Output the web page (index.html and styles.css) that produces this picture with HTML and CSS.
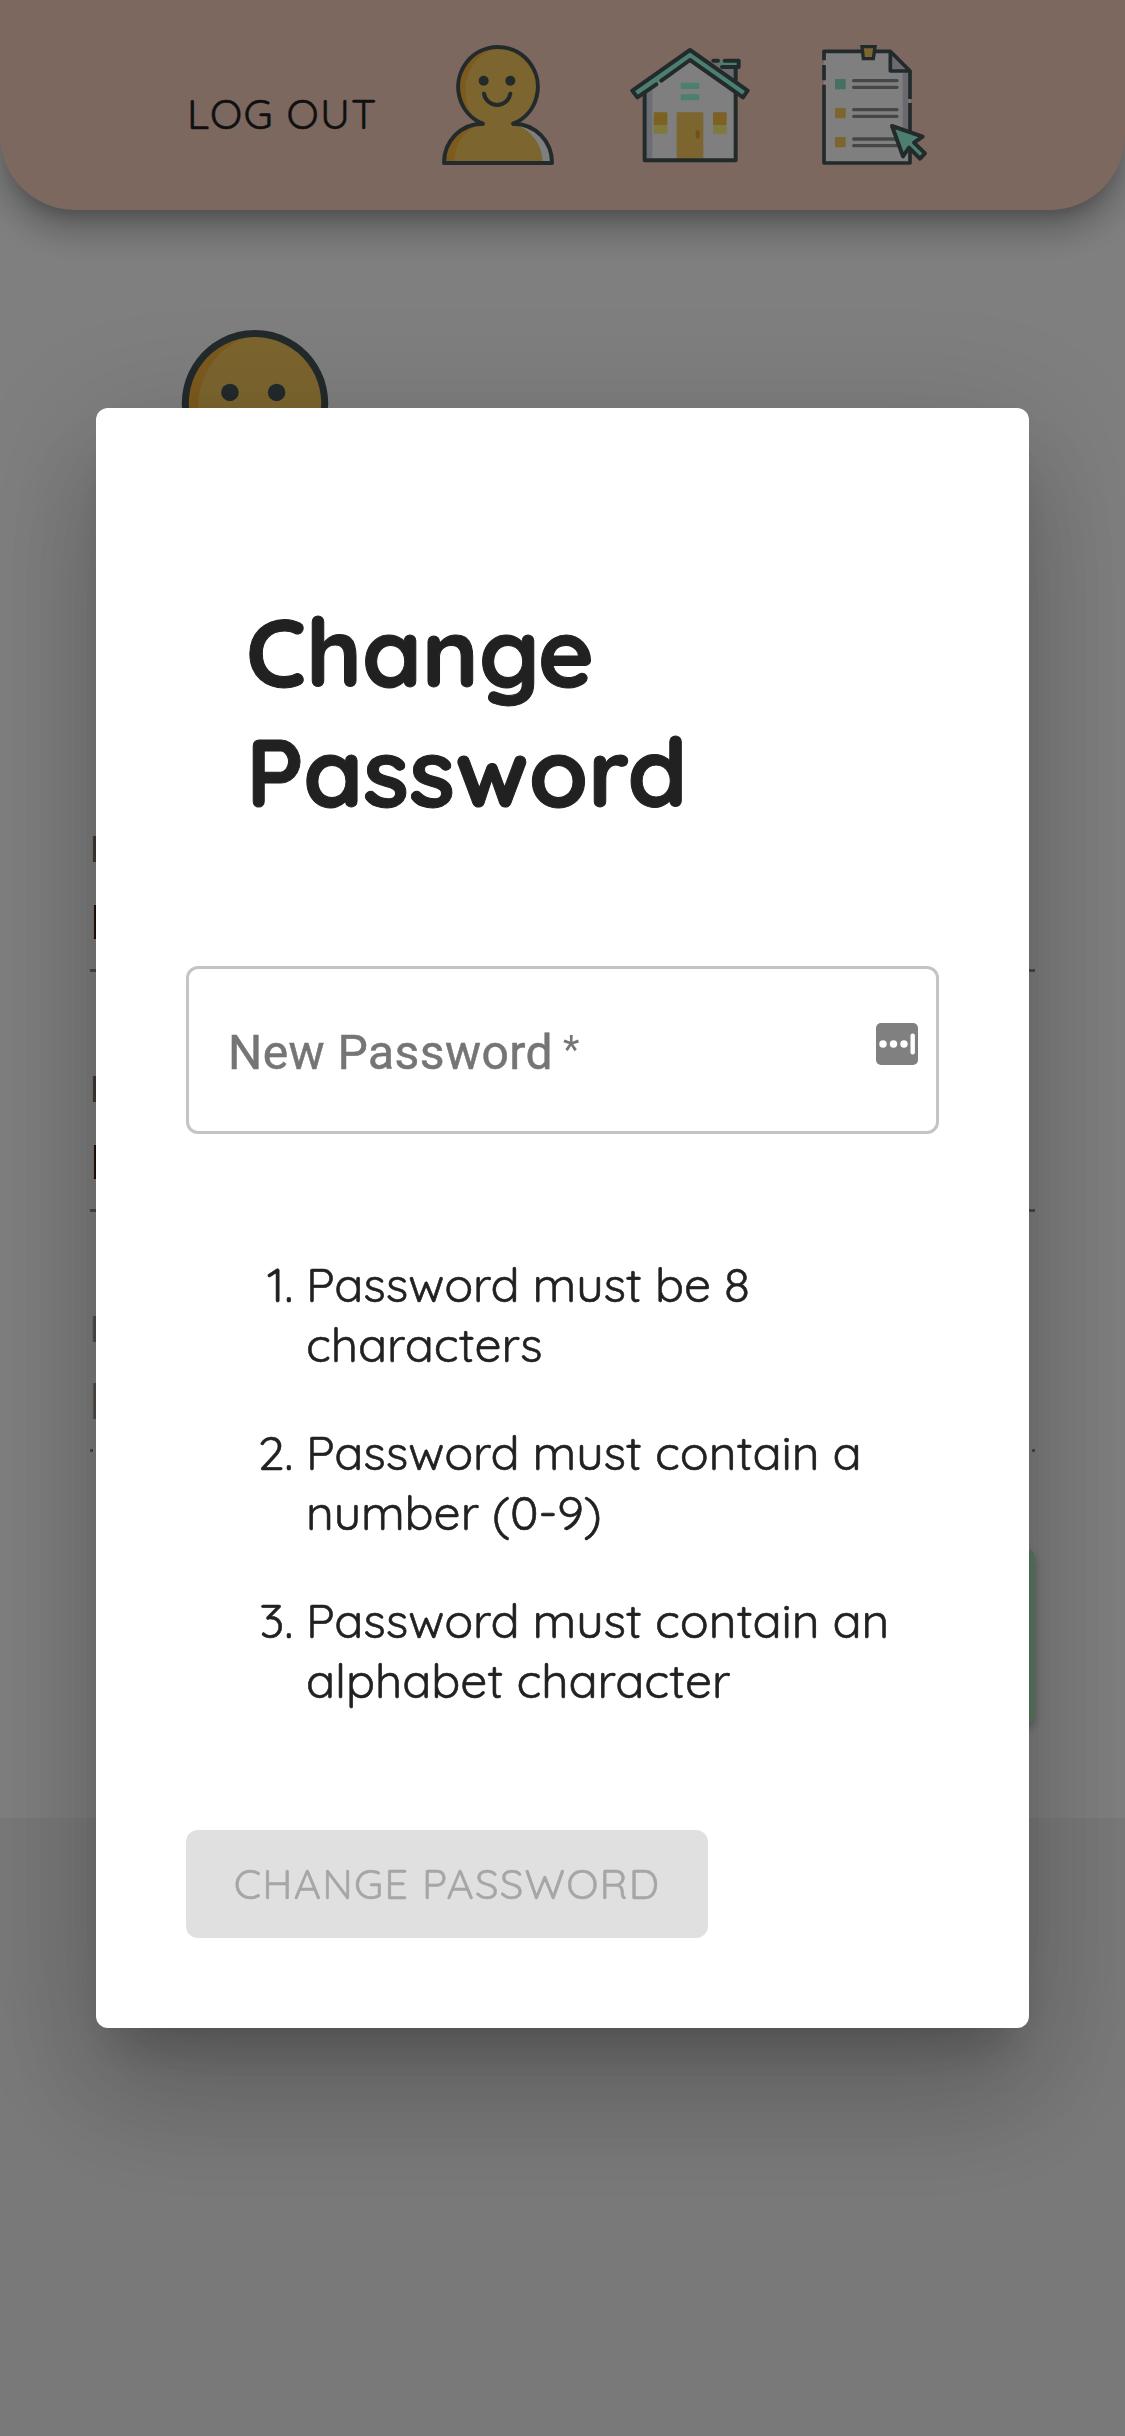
FILE: index.html
```html
<!DOCTYPE html>
<html lang="en">
<head>
<meta charset="utf-8">
<title>Change Password</title>
<link rel="stylesheet" href="styles.css">
</head>
<body>
<svg width="0" height="0" class="defs" aria-hidden="true">
  <symbol id="person" viewBox="54 45 360 360">
    <circle cx="234" cy="170.700" r="119" fill="#f8ca5c"/>
    <path d="M234 52A119 119 0 0 0 160 264C118 200 126 82 234 52Z" fill="#fab43c"/>
    <path d="M190 281C124 283 72 334 72 399H396C396 334 344 283 278 281L234 262Z" fill="#f8ca5c"/>
    <path d="M190 281C124 283 72 334 72 399H102C102 340 136 295 190 281Z" fill="#fab43c"/>
    <path d="M278 281C344 283 396 334 396 399H368C368 345 335 297 278 281Z" fill="#fff"/>
    <g fill="none" stroke="#465458" stroke-width="12" stroke-linecap="round" stroke-linejoin="round">
      <path d="M188 281A119.500 119.500 0 1 1 280 281"/>
      <path d="M188 281C122 281 72 334 72 399H396C396 334 346 281 280 281"/>
      <path d="M192 191A40 40 0 0 0 271 191"/>
    </g>
    <circle cx="191" cy="152" r="15" fill="#465458"/>
    <circle cx="271" cy="152" r="15" fill="#465458"/>
  </symbol>
  <symbol id="house" viewBox="60 45 360 360">
    <path d="M330 112H377V160Z" fill="#d4d4e0"/>
    <path d="M104 180L240 90L377 180V391H104Z" fill="#fff"/>
    <path d="M109 180L127 168V386H109Z" fill="#d9dcec"/>
    <path d="M312 94H386V109H330Z" fill="#98ffe0"/>
    <path d="M68 183L240 60L412 183L397 202L240 90L84 202Z" fill="#98ffe0"/>
    <rect x="212" y="158" width="56" height="19" rx="3" fill="#98ffe0"/>
    <rect x="212" y="193" width="56" height="18" rx="3" fill="#98ffe0"/>
    <path d="M131 247H172V286H131ZM309 247H350V286H309Z" fill="#fac246"/>
    <path d="M131 286H172V311H131ZM309 286H350V311H309Z" fill="#fff27c"/>
    <path d="M200 247H280V387H200Z" fill="#f8ca5c"/>
    <rect x="257" y="300" width="12" height="26" rx="6" fill="#e9a030"/>
    <g fill="none" stroke="#465458" stroke-width="12" stroke-linecap="round" stroke-linejoin="round">
      <path d="M104 192V391H377V190"/>
      <path d="M139 163L82 202L67 182L240 60L413 182L399 202L240 90L154 152"/>
      <path d="M310 92H324M344 92H386V111H336M377 112V150"/>
    </g>
  </symbol>
  <symbol id="form" viewBox="66 45 360 360">
    <path d="M72 64H271L330 123V399H72Z" fill="#fff"/>
    <path d="M308 124H326V330L308 310ZM271 70L324 122H271Z" fill="#d4d4e0"/>
    <path d="M105 147H137V178H105Z" fill="#8ce0c8"/>
    <path d="M105 234H137V265H105ZM105 321H137V352H105Z" fill="#f8ca5c"/>
    <path d="M161 152H291M161 172H291M161 239H291M161 259H291M161 327H291M161 347H291" stroke="#8a8c8e" stroke-width="10" stroke-linecap="round"/>
    <g fill="none" stroke="#465458" stroke-width="11" stroke-linejoin="round">
      <path d="M72 91V64H271L330 123V207M72 105V151M72 164V399H330V219M271 64V123H330"/>
    </g>
    <path d="M186 50H225L220 86H190Z" fill="#f8ca5c" stroke="#465458" stroke-width="10"/>
    <path d="M276 288L368 320L342 338L375 370L360 386L327 353L309 379Z" fill="#98ffe0" stroke="#465458" stroke-width="12" stroke-linejoin="round"/>
  </symbol>
</svg>

<header class="app-bar">
  <a class="logout">LOG OUT</a>
  <svg class="nav-icon"><use href="#person"/></svg>
  <svg class="nav-icon"><use href="#house"/></svg>
  <svg class="nav-icon"><use href="#form"/></svg>
</header>

<main class="profile">
  <svg class="avatar"><use href="#person"/></svg>
  <div class="fields">
    <div class="field"><span class="field-label">First Name</span><span class="field-value">First</span></div>
    <div class="field"><span class="field-label">Last Name</span><span class="field-value">Last</span></div>
    <div class="field field-disabled"><span class="field-label">Email</span><span class="field-value">hello</span></div>
  </div>
  <div class="profile-action"></div>
</main>

<div class="backdrop">
  <section class="dialog">
    <h1 class="title">Change<br>Password</h1>
    <div class="input">
      <span class="placeholder">New Password<span class="star">*</span></span>
      <svg class="key-icon" viewBox="0 0 42 42">
        <rect width="42" height="42" rx="5" fill="#808080"/>
        <g fill="#fff"><circle cx="7" cy="21" r="3.7"/><circle cx="17.5" cy="21" r="3.7"/><circle cx="28" cy="21" r="3.7"/><rect x="34.5" y="10.5" width="4.4" height="21" rx="2"/></g>
      </svg>
    </div>
    <ol class="rules">
      <li><span class="num">1.</span><span>Password must be 8<br>characters</span></li>
      <li><span class="num">2.</span><span>Password must contain a<br>number (0-9)</span></li>
      <li><span class="num">3.</span><span>Password must contain an<br>alphabet character</span></li>
    </ol>
    <button class="submit" disabled>CHANGE PASSWORD</button>
  </section>
</div>
</body>
</html>
```
FILE: styles.css
```css
* { box-sizing: border-box; }

body {
  margin: 0;
  height: 2436px;
  overflow: hidden;
  background: #f3f3f3;
  color: #212121;
  font-family: Quicksand, Lato, sans-serif;
}

.defs { display: block; }

.app-bar {
  position: relative;
  display: flex;
  align-items: center;
  gap: 72px;
  height: 210px;
  padding-left: 187px;
  background: #f8d0bc;
  border-radius: 0 0 75px 75px;
  box-shadow: 0 15px 15px -9px rgba(0,0,0,.2), 0 24px 30px 3px rgba(0,0,0,.14), 0 9px 42px 6px rgba(0,0,0,.12);
}

.logout {
  width: 179px;
  padding-top: 17px;
  font-size: 42px;
  line-height: 54px;
  letter-spacing: 1.2px;
  white-space: nowrap;
  color: #212121;
  -webkit-text-stroke: .5px;
}

.nav-icon { width: 120px; height: 120px; }

.profile {
  height: 1818px;
  margin-top: -210px;
  padding: 330px 90px 0;
  background: #fff;
}

.avatar { display: block; width: 210px; height: 210px; margin-left: 60px; }

.fields { padding-top: 287px; }

.field {
  display: flex;
  flex-direction: column;
  height: 145px;
  margin-bottom: 95px;
  padding-top: 2px;
  border-bottom: 3px solid #949494;
  font-family: Roboto, sans-serif;
  color: #212121;
}

.field-label { font-size: 36px; line-height: 42px; color: #757575; }
.field-value { padding-top: 23px; font-size: 48px; line-height: 57px; }
.field-disabled { border-bottom-style: dotted; }
.field-disabled .field-label, .field-disabled .field-value { color: #9e9e9e; }

.profile-action {
  width: 420px;
  height: 178px;
  margin-left: auto;
  background: #b9f6ca;
  border-radius: 12px;
  box-shadow: 0 9px 3px -6px rgba(0,0,0,.2), 0 6px 6px rgba(0,0,0,.14), 0 3px 15px rgba(0,0,0,.12);
}

.backdrop {
  position: fixed;
  inset: 0;
  display: flex;
  align-items: center;
  justify-content: center;
  background: rgba(0,0,0,.5);
}

.dialog {
  width: 933px;
  height: 1620px;
  padding: 183px 90px 90px;
  background: #fff;
  border-radius: 12px;
  box-shadow: 0 33px 45px -21px rgba(0,0,0,.2), 0 72px 114px 9px rgba(0,0,0,.14), 0 27px 138px 24px rgba(0,0,0,.12);
}

.title {
  margin: 0 0 135px;
  padding-left: 60px;
  font-size: 96px;
  line-height: 120px;
  font-weight: 700;
  letter-spacing: -.3px;
  -webkit-text-stroke: 1px;
}

.input {
  display: flex;
  align-items: center;
  justify-content: space-between;
  height: 168px;
  margin-bottom: 120px;
  padding: 0 18px 0 39px;
  border: 3px solid #c4c4c4;
  border-radius: 12px;
}

.placeholder {
  padding-top: 4px;
  font: 400 48px/57px Roboto, sans-serif;
  letter-spacing: .45px;
  color: #757575;
  -webkit-text-stroke: .5px;
}

.star { margin-left: 10px; font-size: 38px; line-height: 1; vertical-align: 6px; -webkit-text-stroke: 0; }

.key-icon { width: 42px; height: 42px; margin-top: -12px; }

.rules {
  display: flex;
  flex-direction: column;
  gap: 48px;
  margin: 0 0 120px;
  padding-left: 60px;
  list-style: none;
  font-size: 48px;
  line-height: 60px;
  letter-spacing: -.08px;
  -webkit-text-stroke: .6px;
}

.rules li { display: flex; gap: 13px; white-space: nowrap; }
.num { width: 47px; text-align: right; }

.submit {
  display: block;
  width: 522px;
  height: 108px;
  padding: 0 0 2px;
  border: 0;
  border-radius: 12px;
  background: #e0e0e0;
  color: #a6a6a6;
  font-family: inherit;
  font-size: 42px;
  letter-spacing: 1.2px;
  white-space: nowrap;
  -webkit-text-stroke: .5px;
}
```
